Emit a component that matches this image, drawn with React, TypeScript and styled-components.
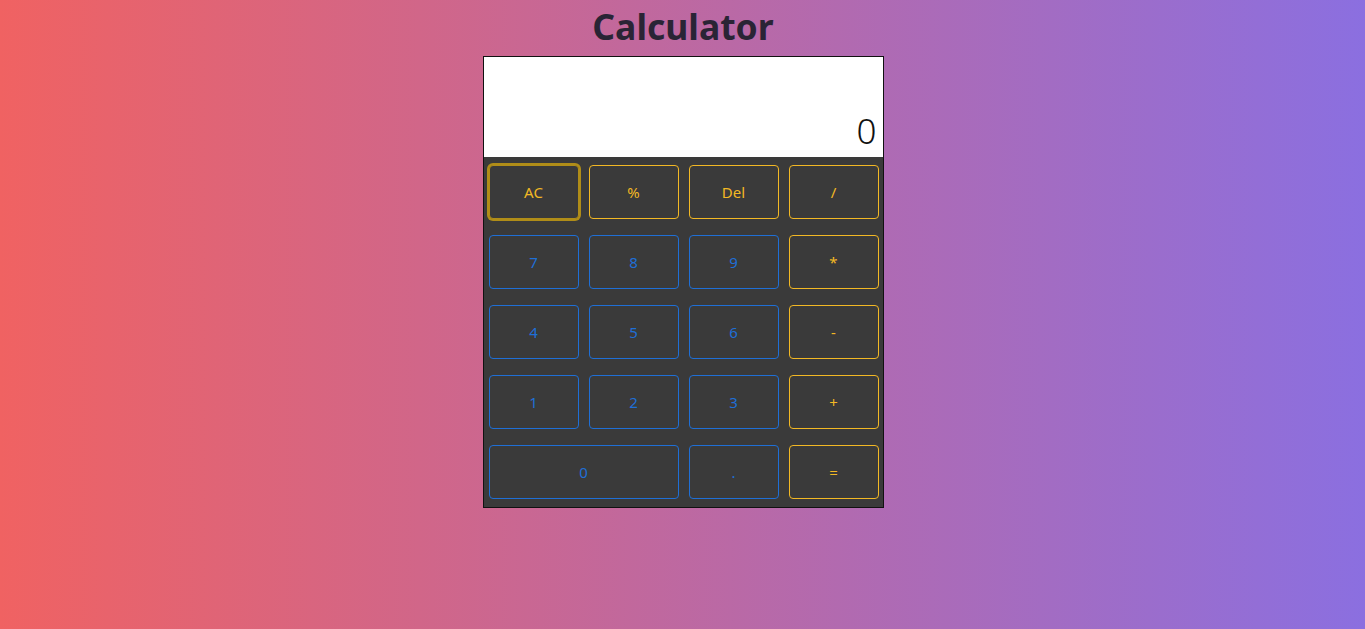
import React from 'react';
import styled, { createGlobalStyle, css } from 'styled-components';

const GlobalStyle = createGlobalStyle`
  html, body {
    margin: 0;
    padding: 0;
    height: 100%;
  }
  body {
    font-family: "Noto Sans", "Open Sans", sans-serif;
    background: linear-gradient(to right, #f06262, #8b6fe0);
    min-height: 629px;
  }
`;

const Page = styled.div`
  display: flex;
  flex-direction: column;
  align-items: center;
  padding-left: 1px;
`;

const Title = styled.h1`
  margin: 0;
  height: 56px;
  line-height: 52px;
  font-size: 35.5px;
  font-weight: 700;
  color: #2a2435;
`;

const Calculator = styled.div`
  width: 399px;
  border: 1px solid #111;
  background-color: #3a3a3a;
`;

const Display = styled.div`
  height: 100px;
  background-color: #fff;
  display: flex;
  align-items: flex-end;
  justify-content: flex-end;
  padding: 0 6px 3px 0;
  box-sizing: border-box;
  font-size: 35px;
  font-weight: 300;
  color: #111;
`;

const Keypad = styled.div`
  display: grid;
  grid-template-columns: repeat(4, 90px);
  grid-auto-rows: 54px;
  column-gap: 10px;
  row-gap: 16px;
  padding: 8px 4px 8px 5px;
`;

const Key = styled.button<{ $op?: boolean; $wide?: boolean; $focused?: boolean }>`
  font-family: inherit;
  font-size: 15px;
  background-color: #3a3a3a;
  border-radius: 4px;
  cursor: pointer;
  border: 1px solid #1f6fd6;
  color: #1f6fd6;
  ${(p) =>
    p.$op &&
    css`
      border-color: #f2b824;
      color: #f2b824;
    `}
  ${(p) =>
    p.$wide &&
    css`
      grid-column: span 2;
    `}
  ${(p) =>
    p.$focused &&
    css`
      border-color: #b08d18;
      box-shadow: 0 0 0 2px #b08d18;
    `}
`;

const keys: { label: string; op?: boolean; wide?: boolean; focused?: boolean }[] = [
  { label: 'AC', op: true, focused: true },
  { label: '%', op: true },
  { label: 'Del', op: true },
  { label: '/', op: true },
  { label: '7' },
  { label: '8' },
  { label: '9' },
  { label: '*', op: true },
  { label: '4' },
  { label: '5' },
  { label: '6' },
  { label: '-', op: true },
  { label: '1' },
  { label: '2' },
  { label: '3' },
  { label: '+', op: true },
  { label: '0', wide: true },
  { label: '.' },
  { label: '=', op: true },
];

function App() {
  return (
    <Page>
      <GlobalStyle />
      <Title>Calculator</Title>
      <Calculator>
        <Display>0</Display>
        <Keypad>
          {keys.map((k) => (
            <Key key={k.label} $op={k.op} $wide={k.wide} $focused={k.focused}>
              {k.label}
            </Key>
          ))}
        </Keypad>
      </Calculator>
    </Page>
  );
}

export default App;
